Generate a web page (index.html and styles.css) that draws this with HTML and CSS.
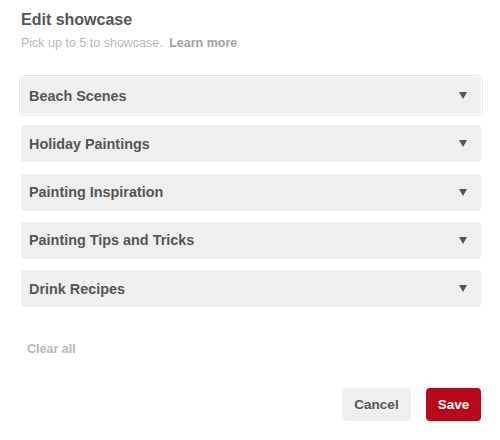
FILE: index.html
```html
<!DOCTYPE html>
<html>
<head>
<meta charset="utf-8">
<link rel="stylesheet" href="styles.css">
</head>
<body>
<div class="dialog">
  <h1 class="title">Edit showcase</h1>
  <p class="subtitle">Pick up to 5 to showcase. <a class="learn">Learn more</a></p>
  <ul class="list">
    <li class="row focused"><span>Beach Scenes</span><svg class="caret" width="8" height="7" viewBox="0 0 8 7"><path d="M0 0H8L4 7Z" fill="#555"/></svg></li>
    <li class="row"><span>Holiday Paintings</span><svg class="caret" width="8" height="7" viewBox="0 0 8 7"><path d="M0 0H8L4 7Z" fill="#555"/></svg></li>
    <li class="row"><span>Painting Inspiration</span><svg class="caret" width="8" height="7" viewBox="0 0 8 7"><path d="M0 0H8L4 7Z" fill="#555"/></svg></li>
    <li class="row"><span>Painting Tips and Tricks</span><svg class="caret" width="8" height="7" viewBox="0 0 8 7"><path d="M0 0H8L4 7Z" fill="#555"/></svg></li>
    <li class="row"><span>Drink Recipes</span><svg class="caret" width="8" height="7" viewBox="0 0 8 7"><path d="M0 0H8L4 7Z" fill="#555"/></svg></li>
  </ul>
  <div class="clear">Clear all</div>
  <div class="actions">
    <button class="btn cancel">Cancel</button>
    <button class="btn save">Save</button>
  </div>
</div>
</body>
</html>
```
FILE: styles.css
```css
html, body {
  margin: 0;
  padding: 0;
  background: #fff;
}
body {
  font-family: "Liberation Sans", Arial, Helvetica, sans-serif;
  color: #555;
}
.dialog {
  padding: 11px 19px 0 21px;
}
.title {
  margin: 0;
  font-size: 16px;
  line-height: 18px;
  font-weight: bold;
  color: #555;
}
.subtitle {
  margin: 7px 0 0;
  font-size: 12.5px;
  line-height: 14px;
  color: #b8b8b8;
}
.learn {
  font-weight: bold;
  color: #a3a3a3;
  margin-left: 3px;
}
.list {
  list-style: none;
  margin: 27px 0 0;
  padding: 0;
  display: flex;
  flex-direction: column;
  gap: 11.25px;
}
.row {
  height: 37px;
  box-sizing: border-box;
  background: #efefef;
  border-radius: 3px;
  display: flex;
  align-items: center;
  justify-content: space-between;
  padding: 0 14px 0 8px;
  font-size: 14.4px;
  font-weight: bold;
  color: #555;
}
.row.focused {
  box-shadow: 0 0 0 1px #fff, 0 0 0 2px #e8e8e8;
}
.caret {
  display: block;
}
.clear {
  margin-top: 35px;
  padding-left: 6px;
  font-size: 12.5px;
  line-height: 14px;
  font-weight: bold;
  color: #b8b8b8;
}
.actions {
  margin-top: 32px;
  display: flex;
  justify-content: flex-end;
  gap: 15px;
}
.btn {
  height: 33px;
  border: none;
  border-radius: 4px;
  padding: 0;
  font-family: "Liberation Sans", Arial, Helvetica, sans-serif;
  font-size: 13.5px;
  font-weight: bold;
}
.cancel {
  background: #efefef;
  color: #555;
  width: 69px;
}
.save {
  background: #b8081a;
  color: #fff;
  width: 55px;
}
```
